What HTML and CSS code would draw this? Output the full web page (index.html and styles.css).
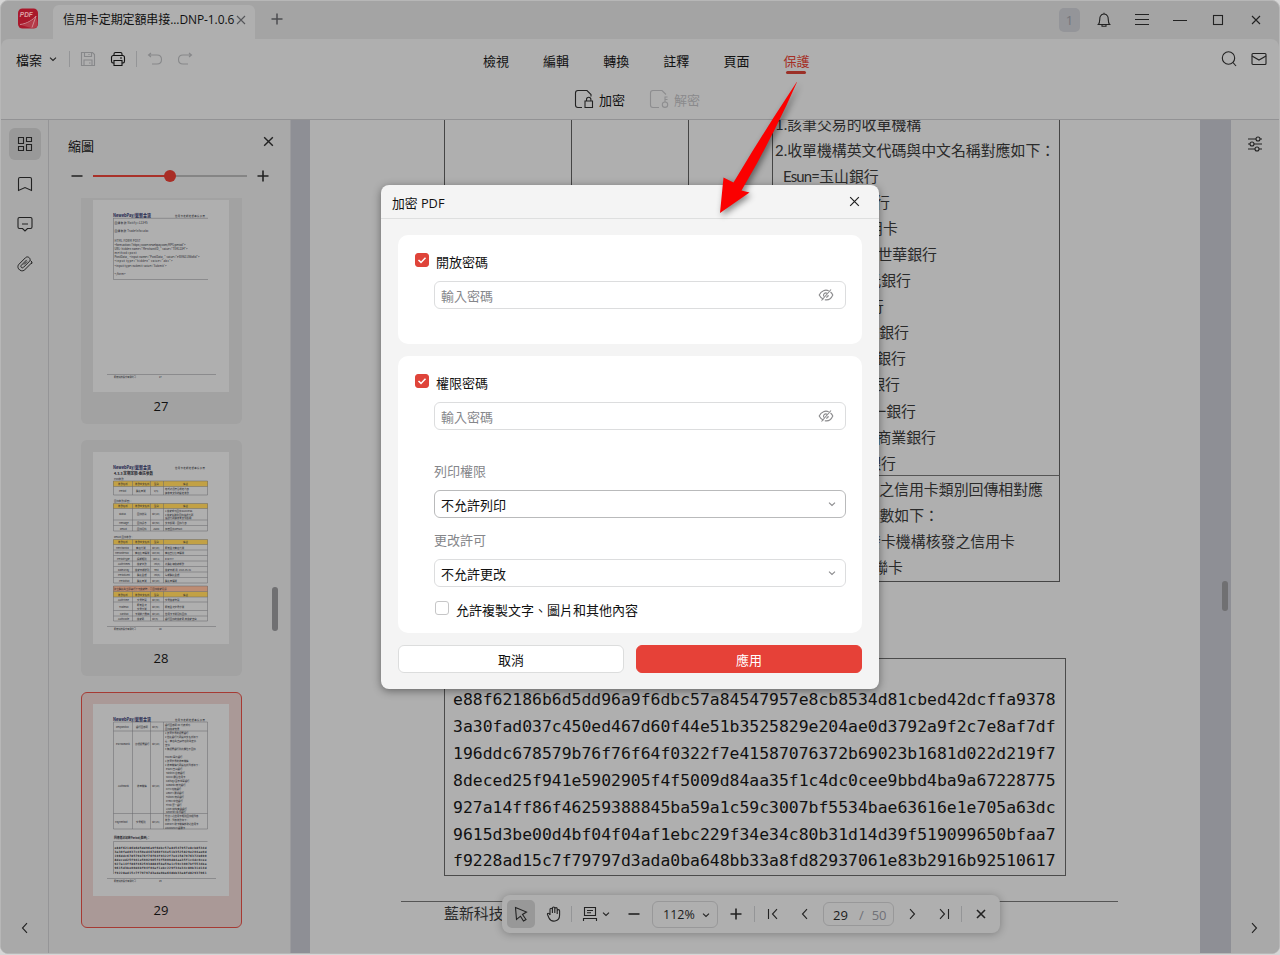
FILE: index.html
```html
<!DOCTYPE html>
<html lang="zh-Hant">
<head>
<meta charset="utf-8">
<title>加密 PDF</title>
<link rel="stylesheet" href="styles.css">
</head>
<body>
<svg class="defs" width="0" height="0">
  <defs>
    <symbol id="cross" viewBox="0 0 12 12"><path d="M2 2l8 8M10 2l-8 8"/></symbol>
    <symbol id="chev-down" viewBox="0 0 10 10"><path d="M2 3.700l3 2.800 3-2.800"/></symbol>
    <symbol id="plus" viewBox="0 0 12 12"><path d="M6 0.500v11M0.500 6h11"/></symbol>
    <symbol id="minus" viewBox="0 0 12 12"><path d="M0.500 6h11"/></symbol>
    <symbol id="left" viewBox="0 0 12 12"><path d="M8 1.200L3.500 6 8 10.800"/></symbol>
    <symbol id="right" viewBox="0 0 12 12"><path d="M4 1.200L8.500 6 4 10.800"/></symbol>
    <symbol id="eye-off" viewBox="0 0 16 12"><path d="M5.500 10.300C3.500 9.700 2.200 8 1.200 6C3.200 1.500 7.500.3 10.700 1.800M12.500 3C13.500 3.800 14.200 4.800 14.800 6C13 10 9.500 11.300 6.800 10.700M13 .5L3.500 11.500M6 7.500A2.300 2.300 0 0 1 9 4.200M8 8.200A2.200 2.200 0 0 0 10.200 6"/></symbol>
  </defs>
</svg>
<div class="window">
  <header class="titlebar">
    <svg class="logo" width="22" height="22" viewBox="0 0 22 22"><rect x="1" y="0.500" width="20" height="20" rx="4.500" fill="#a9182b"/><path d="M4 17C10 16.500 17 12 19 9L20.500 14V17Q20 20 17 20H14Z" fill="#b53b49"/><path d="M3 16.500C10 16 17 11 19 8L15 19.500" fill="none" stroke="#cf8a92"/><text x="2.800" y="9" class="logo-text">PDF</text></svg>
    <div class="tab"><span>信用卡定期定額串接...DNP-1.0.6</span><svg class="ic gray" width="12" height="12"><use href="#cross"/></svg></div>
    <svg class="ic newtab" width="12" height="12"><use href="#plus"/></svg>
    <div class="wincontrols">
      <span class="badge">1</span>
      <span class="ctl"><svg class="ic" width="16" height="16" viewBox="0 0 16 16"><path d="M1.500 12.500h13M2.500 12.500C4.500 10.500 3 6 4.500 4C6 1.300 10 1.300 11.500 4C13 6 11.500 10.500 13.500 12.500M6 13v1.300h4V13M8 2V.8"/></svg></span>
      <span class="ctl"><svg class="ic" width="16" height="14" viewBox="0 0 16 14"><path d="M1 1.500h14M1 6.500h14M1 11.500h14"/></svg></span>
      <span class="ctl"><svg class="ic" width="14" height="14" viewBox="0 0 14 14"><path d="M0 7.500h14"/></svg></span>
      <span class="ctl"><svg class="ic" width="12" height="12" viewBox="0 0 12 12"><rect x="1.500" y="1.500" width="9" height="9"/></svg></span>
      <span class="ctl"><svg class="ic" width="12" height="12"><use href="#cross"/></svg></span>
    </div>
  </header>
  <section class="ribbon">
    <div class="menurow">
      <div class="quick">
        <span>檔案</span><svg class="ic" width="10" height="10"><use href="#chev-down"/></svg>
        <i class="sep"></i>
        <svg class="ic faint" width="16" height="16" viewBox="0 0 16 16"><path d="M1.500 1.500h11l2 2v11h-13zM4.500 1.500v4h7v-4M4 14.500V9h8v5.500M9 3v1M9 12h1.500"/></svg>
        <svg class="ic print" width="16" height="16" viewBox="0 0 16 16"><path d="M4 4V3Q4 1.500 5.500 1.500h5Q12 1.500 12 3v1M4 12H3Q1.500 12 1.500 10V6.500Q1.500 4.500 3.500 4.500h9Q14.500 4.500 14.500 6.500V10Q14.500 12 13 12H12M4 9.500h8v5H4zM10 7h2"/></svg>
        <i class="sep s2"></i>
        <svg class="ic faint" width="16" height="14" viewBox="0 0 16 14"><path d="M4 1L1.500 3 4 5M1.500 3H10Q14.500 3 14.500 7.500Q14.500 12 10 12H5"/></svg>
        <svg class="ic faint redo" width="16" height="14" viewBox="0 0 16 14"><path d="M12 1l2.500 2L12 5M14.500 3H6Q1.500 3 1.500 7.500Q1.500 12 6 12h5"/></svg>
      </div>
      <nav class="menu"><span>檢視</span><span>編輯</span><span>轉換</span><span>註釋</span><span>頁面</span><span class="active">保護</span></nav>
      <div class="side">
        <svg class="ic" width="16" height="16" viewBox="0 0 16 16"><circle cx="7.500" cy="7" r="6.200"/><path d="M12 11.500l3 3.500"/></svg>
        <svg class="ic" width="16" height="14" viewBox="0 0 16 14"><rect x="1" y="1.500" width="14" height="11" rx="1"/><path d="M1 4l7 4 7-4"/></svg>
      </div>
    </div>
    <div class="tools">
      <span class="tool"><svg class="ic" width="20" height="20" viewBox="0 0 20 20"><path d="M8 18.500H4Q1.500 18.500 1.500 16V4Q1.500 1.500 4 1.500H13L17 5.500V7.500M11 12h7.500v6.500H11zM12.500 12V10.500a2.200 2.200 0 0 1 4.400 0V12"/></svg>加密</span>
      <span class="tool off"><svg class="ic" width="20" height="20" viewBox="0 0 20 20"><path d="M10 18.500H4Q1.500 18.500 1.500 16V4Q1.500 1.500 4 1.500H13L17 5.500M16 13V8h2.500M16 10.500h2.500"/><circle cx="16" cy="15.700" r="2.700"/></svg>解密</span>
    </div>
  </section>
  <main class="workspace">
    <aside class="rail">
      <span class="railbtn on"><svg class="ic" width="16" height="16" viewBox="0 0 16 16"><path d="M1.500 1.500h5v6h-5zM9.500 1.500h5v4h-5zM1.500 10.500h5v4h-5zM9.500 8.500h5v6h-5z"/></svg></span>
      <span class="railbtn"><svg class="ic" width="16" height="16" viewBox="0 0 16 16"><path d="M1.500 14.500V3Q1.500 1.500 3 1.500h10Q14.500 1.500 14.500 3v11.500L8 11.500z"/></svg></span>
      <span class="railbtn"><svg class="ic" width="16" height="16" viewBox="0 0 16 16"><path d="M2.500 1.500h11q1.500 0 1.500 1.500v8q0 1.500-1.500 1.500H10.500L8 15l-2.500-2.500H2.500Q1 12.500 1 11V3Q1 1.500 2.500 1.500zM5 8h6"/></svg></span>
      <span class="railbtn"><svg class="ic clip" width="18" height="18" viewBox="0 0 18 18"><path d="M16 7.500L8.800 14.700C5.200 18.200-.5 12.800 3 9.200L9.500 2.700C12 .3 15.800 4 13.300 6.500L7.500 12.300C6 13.800 3.900 11.700 5.400 10.200L10.700 4.900"/><path d="M14.500 5.500Q17 7 15.500 9M8 9.500l3-3"/></svg></span>
      <span class="railbtn last"><svg class="ic" width="12" height="12"><use href="#left"/></svg></span>
    </aside>
    <aside class="thumbs">
      <div class="thumbhead"><span>縮圖</span><svg class="ic" width="13" height="13"><use href="#cross"/></svg></div>
      <div class="slider"><svg class="ic thick" width="12" height="12"><use href="#minus"/></svg><div class="track"><b class="fill"></b><b class="knob"></b></div><svg class="ic thick" width="12" height="12"><use href="#plus"/></svg></div>
      <div class="list">
        <figure class="card first">
          <svg class="mini" width="136" height="192" viewBox="0 0 136 192">
            <text class="brand" x="20" y="16.500" textLength="38" lengthAdjust="spacingAndGlyphs">NewebPay/藍新金流</text><text x="82" y="17.200" textLength="30">信用卡定期定額串接手冊</text>
            <path d="M20 18.300H115M20.500 18.300V79.500H115M14 174.500H123"/>
            <g class="code"><text x="21.500" y="23.500" textLength="33">回傳參數 Notify=12345</text><text x="21.500" y="31.500" textLength="34">回傳參數 TradeInfo=abc</text><text x="21.500" y="41.500" textLength="26">HTML FORM POST</text><text x="21.500" y="45.700" textLength="71">&lt;form action="https://ccore.newebpay.com/MPG/period"&gt;</text><text x="21.500" y="49.800" textLength="73">URL: hidden name="MerchantID_" value="TEK1234"&gt;</text><text x="21.500" y="54" textLength="22">method=post</text><text x="21.500" y="58" textLength="85">PostData_ &lt;input name="PostData_" value="e88f62186b6d"&gt;</text><text x="21.500" y="62" textLength="58">&lt;input type="hidden" value="abc"&gt;</text><text x="21.500" y="66.500" textLength="52">&lt;input type=submit value='Submit'&gt;</text><text x="21.500" y="74.500" textLength="11">&lt;/form&gt;</text></g>
            <text x="21" y="177.500" textLength="22" lengthAdjust="spacingAndGlyphs">藍新科技股份有限公司</text><text x="66" y="177.500">27</text>
          </svg>
          <figcaption>27</figcaption>
        </figure>
        <figure class="card">
          <svg class="mini" width="136" height="192" viewBox="0 0 136 192">
            <text class="brand" x="20" y="16.500" textLength="38" lengthAdjust="spacingAndGlyphs">NewebPay/藍新金流</text><text x="82" y="17.200" textLength="30">信用卡定期定額串接手冊</text>
            <text class="title" x="21" y="23" textLength="39" lengthAdjust="spacingAndGlyphs">4.3.3 定期定額-委託參數</text><text x="21" y="27.500">Post參數</text>
            <g fill="#c2a145"><rect x="20" y="29" width="95" height="5.500"/><rect x="20" y="51.500" width="95" height="5"/><rect x="20" y="87.500" width="95" height="5"/><rect x="20" y="139.500" width="95" height="5.500"/></g><rect x="20" y="134" width="95" height="5.500" fill="#bd8c73"/>
            <path d="M20.500 29H114.500V43H20.500ZM20.500 34.500H114.500M39.500 29V43M57.500 29V43M70.500 29V43M20.500 51.500H114.500V79H20.500ZM20.500 56.500H114.500M20.500 68H114.500M20.500 73.500H114.500M39.500 51.500V79M57.500 51.500V79M70.500 51.500V79M20.500 87.500H114.500V131H20.500ZM20.500 92.500H114.500M20.500 98H114.500M20.500 103.500H114.500M20.500 109H114.500M20.500 114.500H114.500M20.500 120H114.500M20.500 125.500H114.500M39.500 87.500V131M57.500 87.500V131M70.500 87.500V131M20.500 134H114.500V169H20.500ZM20.500 139.500H114.500M20.500 145H114.500M20.500 150H114.500M20.500 158.500H114.500M20.500 164H114.500M39.500 139.500V169M57.500 139.500V169M70.500 139.500V169M14 174.500H123"/>
            <g><text x="25" y="33">參數名稱</text><text x="42" y="33">參數中文名稱</text><text x="61" y="33">型態</text><text x="90" y="33">備註</text><text x="26" y="40">Period</text><text x="43" y="40">委託單號</text><text x="61" y="40">V(5)</text><text x="72" y="38">格式必須符合規定內容</text><text x="72" y="42">請參考文件的設定參數</text><text x="21" y="49.500">回傳參數(解密)：</text></g>
            <g><text x="25" y="55">參數名稱</text><text x="42" y="55">參數中文名稱</text><text x="61" y="55">型態</text><text x="90" y="55">備註</text><text x="26" y="63">Status</text><text x="44" y="63">回傳狀態</text><text x="59" y="63">Str(10)</text><text x="72" y="60">1.授權成功回傳 SUCCESS</text><text x="72" y="63.700">2.授權失敗則回傳錯誤代碼</text><text x="72" y="67.300">錯誤代碼請參考文件說明</text><text x="26" y="72">Message</text><text x="44" y="72">回傳訊息</text><text x="59" y="72">Str(50)</text><text x="72" y="72">文字說明，回傳內容</text><text x="27" y="77.500">Result</text><text x="44" y="77.500">回傳資料</text><text x="60" y="77.500">JSON</text><text x="72" y="77.500">加密回傳 Result</text><text x="21" y="85.500">Result 回傳參數：</text></g>
            <g><text x="25" y="91">參數名稱</text><text x="42" y="91">參數中文名稱</text><text x="61" y="91">型態</text><text x="90" y="91">備註</text><text x="23" y="96.500">MerchantID</text><text x="43" y="96.500">商店代號</text><text x="59" y="96.500">Str(20)</text><text x="72" y="96.500">藍新金流商店代號</text><text x="22" y="102">MerOrderNo</text><text x="42" y="102">商店訂單編號</text><text x="59" y="102">Var(30)</text><text x="72" y="102">商店自訂訂單編號</text><text x="24" y="107.500">PeriodType</text><text x="44" y="107.500">週期類別</text><text x="60" y="107.500">Var(1)</text><text x="72" y="107.500">D W M Y</text><text x="25" y="113">AuthTimes</text><text x="44" y="113">授權次數</text><text x="61" y="113">Int(3)</text><text x="72" y="113">此委託總授權期數</text><text x="25" y="118.500">DateArray</text><text x="42" y="118.500">授權日期排列</text><text x="61" y="118.500">Text</text><text x="72" y="118.500">授權日期,例: 2016-05-01</text><text x="25" y="124">PeriodAmt</text><text x="44" y="124">委託金額</text><text x="61" y="124">Int(6)</text><text x="72" y="124">每期委託金額</text><text x="26" y="129.500">PeriodNo</text><text x="44" y="129.500">委託單號</text><text x="59" y="129.500">Str(20)</text><text x="72" y="129.500">委託單編號</text><text x="21" y="138">建立委託為立即執行十元授權時，另回傳授權資訊</text></g>
            <g><text x="25" y="143.500">參數名稱</text><text x="42" y="143.500">參數中文名稱</text><text x="61" y="143.500">型態</text><text x="90" y="143.500">備註</text><text x="25" y="149">AuthTime</text><text x="44" y="149">交易時間</text><text x="59" y="149">Str(30)</text><text x="72" y="149">交易授權時間</text><text x="26" y="155.500">TradeNo</text><text x="44" y="153.500">藍新金流</text><text x="44" y="157.500">交易序號</text><text x="59" y="155.500">Str(30)</text><text x="72" y="155.500">藍新金流交易序號</text><text x="27" y="162.500">CardNo</text><text x="42" y="162.500">卡號前六後四</text><text x="59" y="162.500">Str(10)</text><text x="72" y="162.500">信用卡卡號資料回傳</text><text x="25" y="168">AuthCode</text><text x="44" y="168">授權碼</text><text x="59" y="168">Str(6)</text><text x="72" y="168">銀行回傳的授權碼,未授權空白</text></g>
            <text x="21" y="177.500" textLength="22" lengthAdjust="spacingAndGlyphs">藍新科技股份有限公司</text><text x="66" y="177.500">28</text>
          </svg>
          <figcaption>28</figcaption>
        </figure>
        <figure class="card current">
          <svg class="mini" width="136" height="192" viewBox="0 0 136 192">
            <text class="brand" x="20" y="16.500" textLength="38" lengthAdjust="spacingAndGlyphs">NewebPay/藍新金流</text><text x="82" y="17.200" textLength="30">信用卡定期定額串接手冊</text>
            <path d="M20.500 18H114.500V125H20.500ZM20.500 27H114.500M20.500 109.500H114.500M39.500 18V125M57.500 18V125M70.500 18V125M114.500 137.500H20.500V170M14 174.500H123"/>
            <g><text x="23" y="23.500">RespondCo</text><text x="43" y="23.500">銀行回應碼</text><text x="59" y="23.500">Str(5)</text><text x="23" y="41">EscrowBank</text><text x="42" y="41">款項保管銀行</text><text x="59" y="41">Str(10)</text><text x="25" y="83">AuthBank</text><text x="44" y="83">收單機構</text><text x="59" y="83">Str(10)</text><text x="22" y="118.500">PayMethod</text><text x="43" y="118.500">交易類別</text><text x="59" y="118.500">Str(15)</text></g>
            <g><text x="72" y="21.500">銀行回應碼 00 代表成功</text><text x="72" y="25.500">回傳授權結果</text><text x="72" y="29.800">1.該筆交易的保管銀行</text><text x="72" y="33.800">2.信託銀行代碼與中文名稱如下</text><text x="72" y="37.800">若，商店為直屬特店則為空值</text><text x="72" y="41.500">空值</text><text x="72" y="45.500">3.無保管銀行則此欄位不回傳</text><text x="72" y="53.500">HNCB=華南銀行</text><text x="72" y="57.500">1.該筆交易的收單機構</text><text x="72" y="61.500">2.收單機構代碼與名稱對應如下：</text><text x="73" y="65.500">Esun=玉山銀行</text><text x="73" y="69.500">Taishin=台新銀行</text><text x="73" y="73.500">NCCC=聯合信用卡</text><text x="73" y="77.500">Cathay=國泰世華銀行</text><text x="73" y="81.500">SKBank=新光銀行</text><text x="73" y="85.500">CITI=花旗銀行</text><text x="73" y="89.500">UBOT= 聯邦銀行</text><text x="73" y="93.500">Fubon=富邦銀行</text><text x="73" y="97.500">CTBC=中信銀行</text><text x="73" y="101.500">First=第一銀行</text><text x="73" y="105.500">LINE=連線商業銀行</text><text x="73" y="109">SinoPac=永豐銀行</text><text x="72" y="113.300">付款人之信用卡類別回傳相對應</text><text x="72" y="117.300">參數，對應參數如下：</text><text x="72" y="121">CREDIT=發卡機構核發之信用卡</text><text x="72" y="124.500">UNIONPAY=銀聯卡</text></g>
            <text class="title small" x="21" y="134.500" textLength="36" lengthAdjust="spacingAndGlyphs">回傳資訊加密Period(範例)：</text>
            <g class="hash"><text x="21.500" y="145" textLength="92">e88f62186b6d5dd96a9f6dbc57a84547957e8cb8534d</text><text x="21.500" y="149" textLength="92">3a30fad037c450ed467d60f44e51b3525829e204ae0d</text><text x="21.500" y="153" textLength="92">196ddc678579b76f76f64f0322f7e41587076372b690</text><text x="21.500" y="157.200" textLength="92">8deced25f941e5902905f4f5009d84aa35f1c4dc0cee</text><text x="21.500" y="161.300" textLength="92">927a14ff86f46259388845ba59a1c59c3007bf5534ba</text><text x="21.500" y="165.400" textLength="92">9615d3be00d4bf04f04af1ebc229f34e34c80b31d14d</text><text x="21.500" y="169.500" textLength="92">f9228ad15c7f79797d3ada0ba648bb33a8fd82937061</text></g>
            <text x="21" y="177.500" textLength="22" lengthAdjust="spacingAndGlyphs">藍新科技股份有限公司</text><text x="66" y="177.500">29</text>
          </svg>
          <figcaption>29</figcaption>
        </figure>
        <i class="bar listbar"></i>
      </div>
    </aside>
    <section class="doc">
      <article class="page">
        <div class="grid">
          <div></div><div></div><div></div>
          <div class="cell">
            <p>1.該筆交易的收單機構</p><p>2.收單機構英文代碼與中文名稱對應如下：</p><p class="ind"><span>Esun=</span>玉山銀行</p>
            <p class="r" style="width:115px">Taishin=台新銀行</p><p class="r" style="width:123px">聯合信用卡</p><p class="r" style="width:162px">國泰世華銀行</p><p class="r" style="width:136px">新光銀行</p><p class="r" style="width:109px">花旗銀行</p><p class="r" style="width:134px">聯邦 銀行</p><p class="r" style="width:131px">富邦銀行</p><p class="r" style="width:125px">中信銀行</p><p class="r" style="width:141px">第一銀行</p><p class="r" style="width:161px">連線商業銀行</p><p class="r" style="width:121px">永豐銀行</p>
          </div>
          <div></div><div></div><div></div>
          <div class="cell">
            <p class="r" style="width:268px">付款人 之信用卡類別回傳相對應</p><p class="r" style="width:164px">對應參 數如下：</p><p class="r" style="width:240px">發卡機構核發之信用卡</p><p class="r" style="width:128px">銀聯卡</p>
          </div>
        </div>
        <div class="hashbox">e88f62186b6d5dd96a9f6dbc57a84547957e8cb8534d81cbed42dcffa9378<br>3a30fad037c450ed467d60f44e51b3525829e204ae0d3792a9f2c7e8af7df<br>196ddc678579b76f76f64f0322f7e41587076372b69023b1681d022d219f7<br>8deced25f941e5902905f4f5009d84aa35f1c4dc0cee9bbd4ba9a67228775<br>927a14ff86f46259388845ba59a1c59c3007bf5534bae63616e1e705a63dc<br>9615d3be00d4bf04f04af1ebc229f34e34c80b31d14d39f519099650bfaa7<br>f9228ad15c7f79797d3ada0ba648bb33a8fd82937061e83b2916b92510617</div>
        <footer class="pagefoot">藍新科技</footer>
      </article>
      <i class="bar docbar"></i>
    </section>
    <aside class="rail right">
      <span class="railbtn"><svg class="ic" width="16" height="16" viewBox="0 0 16 16"><path d="M1 3h8M13 3h2M1 8h2M7 8h8M1 13h7M12 13h3"/><circle cx="11" cy="3" r="2"/><circle cx="5" cy="8" r="2"/><circle cx="10" cy="13" r="2"/></svg></span>
      <span class="railbtn last"><svg class="ic" width="12" height="12"><use href="#right"/></svg></span>
    </aside>
  </main>
</div>

<div class="pager">
  <span class="pb w28 on"><svg class="ic" width="16" height="18" viewBox="0 0 16 18"><path d="M2.500 2.500L13.500 7 9.500 9.500 13 14.500 10.500 16 7.500 11.200 3.500 14.500z"/></svg></span>
  <span class="pb w36 hand"><svg class="ic" width="18" height="18" viewBox="0 0 18 18"><path d="M5 10V4.500a1.200 1.200 0 0 1 2.400 0V8M7.400 8V3.200a1.200 1.200 0 0 1 2.400 0V8M9.800 8V3.800a1.200 1.200 0 0 1 2.400 0V9M12.200 7V5.800a1.200 1.200 0 0 1 2.400 0V10C14.600 17.500 6 17.500 4 13L2.500 9.500C2 8 4 7.500 5 10"/></svg></span>
  <i class="sep"></i>
  <span class="pb w44"><svg class="ic" width="16" height="16" viewBox="0 0 16 16"><path d="M2.500 1.500h11v8h-11zM5 4.500h6M5 6.800h4M1.500 15v-2.500h13V15"/></svg><svg class="ic" width="10" height="10"><use href="#chev-down"/></svg></span>
  <span class="pb w36"><svg class="ic thick" width="12" height="12"><use href="#minus"/></svg></span>
  <span class="field zoomf">112%<svg class="ic" width="10" height="10"><use href="#chev-down"/></svg></span>
  <span class="pb w36"><svg class="ic thick" width="12" height="12"><use href="#plus"/></svg></span>
  <i class="sep"></i>
  <span class="pb w36"><svg class="ic" width="12" height="12" viewBox="0 0 12 12"><path d="M1.500 1v10M10 1.200L5.500 6 10 10.800"/></svg></span>
  <span class="pb w28"><svg class="ic" width="12" height="12"><use href="#left"/></svg></span>
  <span class="field pagef">29<em>/</em><em>50</em></span>
  <span class="pb w36"><svg class="ic" width="12" height="12"><use href="#right"/></svg></span>
  <span class="pb w31"><svg class="ic" width="12" height="12" viewBox="0 0 12 12"><path d="M10.500 1v10M2 1.200L6.500 6 2 10.800"/></svg></span>
  <i class="sep"></i>
  <span class="pb w36 hand"><svg class="ic thick" width="12" height="12"><use href="#cross"/></svg></span>
</div>

<div class="modal">
  <div class="mhead"><span>加密 PDF</span><svg class="ic" width="13" height="13"><use href="#cross"/></svg></div>
  <div class="mbody">
    <section class="box open">
      <label class="check"><span class="cb on"><svg width="10" height="8" viewBox="0 0 10 8"><path d="M1.500 4l2.500 2.400 4.500-4.600"/></svg></span>開放密碼</label>
      <div class="input ph">輸入密碼<svg class="ic" width="16" height="12"><use href="#eye-off"/></svg></div>
    </section>
    <section class="box perm">
      <label class="check"><span class="cb on"><svg width="10" height="8" viewBox="0 0 10 8"><path d="M1.500 4l2.500 2.400 4.500-4.600"/></svg></span>權限密碼</label>
      <div class="input ph">輸入密碼<svg class="ic" width="16" height="12"><use href="#eye-off"/></svg></div>
      <div class="lab l1">列印權限</div>
      <div class="input sel focus">不允許列印<svg class="ic" width="10" height="10"><use href="#chev-down"/></svg></div>
      <div class="lab l2">更改許可</div>
      <div class="input sel">不允許更改<svg class="ic" width="10" height="10"><use href="#chev-down"/></svg></div>
      <label class="check copy"><span class="cb"></span>允許複製文字、圖片和其他內容</label>
    </section>
    <div class="actions"><button>取消</button><button class="primary">應用</button></div>
  </div>
</div>
<svg class="arrow" width="110" height="150" viewBox="700 72 110 150"><path d="M796.700 82Q763 133 733.500 182.500L723.500 177.500 720 213 749.500 192.500 741.500 190.500Q774 135 797 82Z"/></svg>
</body>
</html>
```

FILE: styles.css
```css
* { box-sizing: border-box; }
body { margin: 0; width: 1280px; height: 955px; overflow: hidden; position: relative; background: #d6d6d6; color: #111; font: 13px/18px "Open Sans", "Noto Sans CJK TC", sans-serif; }
p, figure { margin: 0; }
svg { display: block; flex: none; }
.defs { position: absolute; }
.ic { fill: none; stroke: #222; stroke-width: 1.1; }
.ic.thick { stroke-width: 1.6; }
.ic.gray { stroke: #55565a; }
.ic.faint { stroke: #87888a; }
.ic.clip { stroke-width: 1; }
.sep { width: 1px; height: 16px; background: #949597; flex: none; }

.window { height: 954px; border: 1px solid #b7b7b7; border-radius: 8px; overflow: hidden; background: #a4a4a4; display: flex; flex-direction: column; }
.titlebar { height: 38px; flex: none; display: flex; padding-left: 16px; }
.logo { margin-top: 7px; }
.logo-text { font: italic bold 6.5px "Liberation Sans", sans-serif; fill: #dda4a8; }
.tab { width: 202px; height: 34px; margin: 4px 0 0 14px; padding: 0 8px 4px 10px; background: #afafaf; border-radius: 6px 6px 0 0; display: flex; align-items: center; justify-content: space-between; white-space: nowrap; font-size: 12px; }
.tab span { letter-spacing: -.09px; }
.newtab { margin: 12px 0 0 16px; stroke: #4c4d50; stroke-width: 1.5; }
.wincontrols { margin-left: auto; padding-right: 4px; display: flex; align-items: center; }
.ctl { width: 38px; display: flex; justify-content: center; }
.badge { width: 21px; height: 24px; margin-right: 5px; border-radius: 5px; background: #949599; color: #73747a; text-align: center; line-height: 25px; }

.ribbon { height: 81px; flex: none; background: #afafaf; border-bottom: 1px solid #929294; border-radius: 8px 8px 0 0; }
.menurow { height: 42px; display: grid; grid-template-columns: 482px auto 1fr; }
.quick { display: flex; align-items: center; padding-left: 15px; height: 40px; }
.quick span { margin: 2px 6px 0 0; }
.quick .sep { margin: 0 10px 0 11px; }
.print { margin-left: 14px; stroke: #111; }
.quick .s2 { margin: 0 10px; }
.redo { margin-left: 14px; }
.menu { display: flex; gap: 34.100px; padding-top: 13px; }
.menu span { height: 20px; width: 26px; }
.menu .active { color: #a52e25; display: flex; flex-direction: column; align-items: center; white-space: nowrap; }
.menu .active::after { content: ""; width: 20px; height: 3px; flex: none; margin-top: 1px; border-radius: 2px; background: #9b3027; }
.side { display: flex; justify-content: flex-end; align-items: center; height: 40px; padding-right: 12px; gap: 14px; }
.tools { display: flex; gap: 24px; padding: 7px 0 0 573px; }
.tool { display: flex; align-items: center; gap: 5px; line-height: 24px; }
.tool svg { margin-top: -3px; }
.tool.off { color: #8a8a8c; }
.tool.off svg { stroke: #8d8d8f; }

.workspace { flex: 1; min-height: 0; display: flex; }
.rail { width: 48px; flex: none; display: flex; flex-direction: column; gap: 8px; align-items: center; padding: 8px 0 9px; background: #a9a9a9; border-right: 1px solid #959597; }
.rail.right { border: 0; }
.railbtn { width: 32px; height: 32px; border-radius: 6px; display: flex; align-items: center; justify-content: center; }
.railbtn.on { background: #999; }
.railbtn.last { margin-top: auto; }
.right .last { padding-right: 3px; }

.thumbs { width: 242px; flex: none; background: #a9a9a9; display: flex; flex-direction: column; border-right: 1px solid #9b9b9e; }
.thumbhead { height: 46px; display: flex; justify-content: space-between; padding: 17px 15px 0 19px; }
.thumbhead svg { margin-top: -2px; stroke-width: 1.3; }
.slider { display: flex; align-items: center; gap: 10px; padding-left: 22px; height: 20px; }
.track { width: 154px; height: 2px; background: #858585; position: relative; }
.fill { display: block; width: 77px; height: 2px; background: #a93129; }
.knob { position: absolute; left: 71px; top: -5px; width: 12px; height: 12px; border-radius: 50%; background: #a92d25; }
.list { position: relative; flex: 1; min-height: 0; margin-top: 12px; padding-left: 32px; overflow: hidden; display: flex; flex-direction: column; gap: 16px; }
.card { width: 161px; height: 236px; flex: none; border-radius: 6px; background: #a2a2a2; padding: 12px; }
.card.first { margin-top: -10px; }
.card.current { background: #aa9997; border: 1px solid #a63a33; padding: 11px; }
figcaption { text-align: center; margin-top: 5px; padding-right: 1px; }
.mini { background: #afafaf; }
.mini text { font: 2.4px "Noto Sans CJK TC", sans-serif; fill: #25252c; }
.mini .code text { font-size: 2.8px; }
.mini path { fill: none; stroke: #66666a; stroke-width: .5; }
.mini .brand { font-size: 4.500px; font-weight: bold; fill: #20234b; }
.mini .title { font-size: 4px; font-weight: bold; }
.mini .small { font-size: 3px; }
.mini .hash text { font: bold 3px "DejaVu Sans Mono", monospace; }
.bar { position: absolute; width: 6px; border-radius: 3px; background: #707072; }
.listbar { right: 12px; top: 389px; height: 44px; }

.doc { width: 940px; flex: none; position: relative; background: #8e8f95; padding-left: 19px; overflow: hidden; }
.page { width: 890px; height: 834px; background: #afafaf; padding-left: 134px; overflow: hidden; color: #2a2a2a; }
.docbar { right: 3px; top: 461px; height: 30px; }
.grid { width: 616px; margin-top: -9px; display: grid; grid-template-columns: 127px 117px 84px 287px; grid-template-rows: 365px 105px; border: solid #454545; border-width: 0 0 1px 1px; }
.grid > div { border-right: 1px solid #454545; }
.grid > div:nth-child(-n+4) { border-bottom: 1px solid #555; }
.cell { padding-left: 2px; font: 14.900px/26.050px Lato, "Noto Sans CJK TC", sans-serif; white-space: nowrap; }
.cell .ind { padding-left: 8px; }
.ind span { letter-spacing: -.8px; }
.cell .r { display: flex; justify-content: flex-end; }
.hashbox { width: 622px; height: 218px; margin-top: 76px; border: 1px solid #4b4b4b; padding: 28px 0 0 8px; color: #111; font: 16.420px/26.900px "DejaVu Sans Mono", monospace; white-space: nowrap; }
.pagefoot { width: 717px; margin: 25px 0 0 -43px; border-top: 1px solid #555; padding-left: 43px; font-size: 14.900px; line-height: 23px; }

.pager { position: absolute; left: 502px; top: 895px; width: 498px; height: 38px; padding-left: 5px; border-radius: 8px; background: #afafaf; box-shadow: 0 1px 8px rgba(0,0,0,.28); display: flex; align-items: center; color: #1c1c1c; }
.pb { height: 28px; flex: none; display: flex; align-items: center; justify-content: center; border-radius: 5px; }
.pb.on { background: #989898; }
.w28 { width: 28px; }
.w36 { width: 36px; }
.w44 { width: 44px; gap: 3px; padding-left: 5px; }
.w31 { width: 31px; padding-right: 3px; }
.hand { padding-left: 2px; }
.field { flex: none; border: 1px solid #989899; border-radius: 6px; display: flex; align-items: center; line-height: 26px; padding-top: 1px; }
.zoomf { width: 66px; height: 27px; padding-left: 10px; gap: 6px; font-size: 12.500px; }
.pagef { width: 71px; height: 24px; margin-left: 4px; padding-left: 9px; }
.pagef em { font-style: normal; color: #707177; margin-left: 11px; }
.pagef em + em { margin-left: 8px; }

.modal { position: absolute; left: 381px; top: 185px; width: 498px; height: 504px; border-radius: 8px; background: #f4f4f4; box-shadow: 0 2px 9px rgba(0,0,0,.42); overflow: hidden; }
.mhead { height: 34px; border-bottom: 1px solid #dedfdf; display: flex; align-items: center; justify-content: space-between; padding: 2px 18px 0 11px; font-size: 12.800px; }
.mhead svg { margin-top: -3px; }
.mbody { padding: 16px 17px; display: flex; flex-direction: column; gap: 12px; }
.box { background: #fff; border-radius: 10px; padding: 17px 16px 0 17px; }
.open { height: 109px; }
.perm { height: 277px; }
.check { display: flex; gap: 7px; height: 29px; line-height: 20px; }
.cb { width: 14px; height: 14px; margin-top: 1px; border: 1px solid #c6c6c7; border-radius: 3px; background: #fff; display: flex; align-items: center; justify-content: center; }
.cb.on { background: #df443a; border-color: #df443a; }
.cb path { fill: none; stroke: #fff; stroke-width: 1.500; }
.input { margin-left: 19px; width: 412px; height: 28px; border: 1px solid #dcddde; border-radius: 6px; display: flex; justify-content: space-between; align-items: center; padding: 2px 11px 0 6px; }
.input svg { stroke: #8b8b8d; margin-top: -2px; }
.input.sel { padding-right: 8px; }
.input.focus { border-color: #b9babb; }
.ph, .lab { color: #85868a; }
.lab { margin-left: 19px; height: 18px; }
.l1 { margin: 32px 0 10px 19px; }
.l2 { margin: 13px 0 10px 19px; }
.copy { margin: 13px 0 0 20px; }
.actions { display: flex; gap: 12px; }
.actions button { flex: 1; height: 28px; border: 1px solid #dcdddd; border-radius: 6px; background: #fff; padding: 2px 0 0; font: inherit; color: #111; }
.actions .primary { background: #e64138; border-color: #e64138; color: #fff; }
.arrow { position: absolute; left: 700px; top: 72px; fill: #fb0000; filter: drop-shadow(2px 3px 3px rgba(0,0,0,.45)); }
```
